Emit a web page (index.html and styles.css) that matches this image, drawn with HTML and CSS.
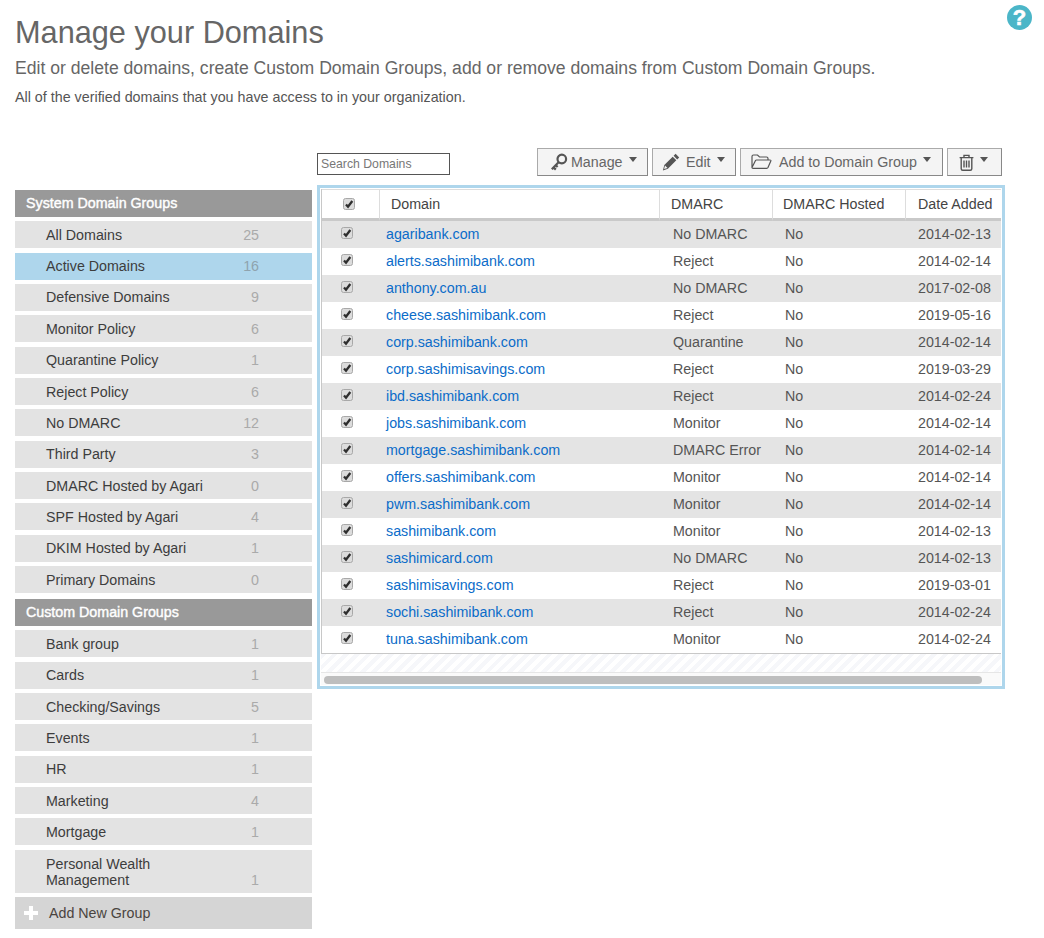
FILE: index.html
```html
<!DOCTYPE html>
<html lang="en">
<head>
    <meta charset="UTF-8">
    <meta name="viewport" content="width=device-width, initial-scale=1.0">
    <title>Manage your Domains</title>
    <link rel="stylesheet" href="styles.css">
</head>
<body>

<svg class="defs" width="0" height="0">
    <symbol id="tick" viewBox="0 0 12 12">
        <rect x="0.5" y="0.5" width="11" height="11" rx="2" fill="#dcdcdc" stroke="#a8a8a8"/>
        <path d="M3 6.600 L5 8.800 L9.300 3" fill="none" stroke="#2e2e2e" stroke-width="2.300"/>
    </symbol>
</svg>

<a class="help" href="#">?</a>

<header class="page-head">
    <h1>Manage your Domains</h1>
    <h2>Edit or delete domains, create Custom Domain Groups, add or remove domains from Custom Domain Groups.</h2>
    <p>All of the verified domains that you have access to in your organization.</p>
</header>

<div class="layout">
    <aside class="sidebar">
        <h3 class="group-title">System Domain Groups</h3>
        <ul class="group-list">
            <li><span>All Domains</span><b>25</b></li>
            <li class="active"><span>Active Domains</span><b>16</b></li>
            <li><span>Defensive Domains</span><b>9</b></li>
            <li><span>Monitor Policy</span><b>6</b></li>
            <li><span>Quarantine Policy</span><b>1</b></li>
            <li><span>Reject Policy</span><b>6</b></li>
            <li><span>No DMARC</span><b>12</b></li>
            <li><span>Third Party</span><b>3</b></li>
            <li><span>DMARC Hosted by Agari</span><b>0</b></li>
            <li><span>SPF Hosted by Agari</span><b>4</b></li>
            <li><span>DKIM Hosted by Agari</span><b>1</b></li>
            <li><span>Primary Domains</span><b>0</b></li>
        </ul>
        <h3 class="group-title">Custom Domain Groups</h3>
        <ul class="group-list">
            <li><span>Bank group</span><b>1</b></li>
            <li><span>Cards</span><b>1</b></li>
            <li><span>Checking/Savings</span><b>5</b></li>
            <li><span>Events</span><b>1</b></li>
            <li><span>HR</span><b>1</b></li>
            <li><span>Marketing</span><b>4</b></li>
            <li><span>Mortgage</span><b>1</b></li>
            <li class="tall"><span>Personal Wealth<br>Management</span><b>1</b></li>
        </ul>
        <div class="add-group">
            <svg class="plus" width="16" height="16" viewBox="0 0 16 16"><path d="M6 1h4v5h5v4h-5v5H6v-5H1V6h5z" fill="#fff"/></svg>
            Add New Group
        </div>
    </aside>

    <main class="content">
        <div class="toolbar">
            <input class="search" type="text" placeholder="Search Domains">
            <div class="buttons">
                <button class="btn btn-manage">
                    <svg width="18" height="18" viewBox="0 0 18 18"><circle cx="11.800" cy="6" r="4.300" fill="none" stroke="#555" stroke-width="2.200"/><path d="M8.800 9 L1.800 16.200 M3.600 14.400 L5.800 16.600 M5.800 12.200 L7.600 14" fill="none" stroke="#555" stroke-width="2.200"/></svg>
                    Manage<i class="caret"></i>
                </button>
                <button class="btn btn-edit">
                    <svg width="18" height="18" viewBox="0 0 18 18"><path d="M13.600.8l3.600 3.600-2 2-3.600-3.600zM10.700 3.700l3.600 3.600-8.400 8.400-5 1.700 1.400-5.300zM3 12.500l-.9 3.400 3.400-1z" fill="#555" fill-rule="evenodd"/></svg>
                    Edit<i class="caret"></i>
                </button>
                <button class="btn btn-group">
                    <svg width="21" height="16" viewBox="0 0 21 16"><path d="M1 13.500V2.500A1.500 1.500 0 0 1 2.500 1h4l2 2h7A1.500 1.500 0 0 1 17 4.500V6M1 13.500L4.500 6.500Q4.800 6 5.500 6H19q1.200 0 .8 1l-2.800 6.500q-.4.800-1.300.8H2q-1 0-1-.8z" fill="none" stroke="#555" stroke-width="1.200"/></svg>
                    Add to Domain Group<i class="caret"></i>
                </button>
                <button class="btn btn-trash">
                    <svg width="15" height="17" viewBox="0 0 15 17"><path d="M5 3.300V1.400h5v1.900M.6 3.600h13.800M2.200 3.600v11.200q0 1.500 1.500 1.500h7.600q1.500 0 1.500-1.500V3.600M5 6.500v7M7.500 6.500v7M10 6.500v7" fill="none" stroke="#555" stroke-width="1.400"/></svg>
                    <i class="caret"></i>
                </button>
            </div>
        </div>

        <div class="grid-frame">
            <table class="grid">
                <thead>
                    <tr>
                        <th class="col-check"><svg class="tick"><use href="#tick"/></svg></th>
                        <th class="col-domain">Domain</th>
                        <th class="col-dmarc">DMARC</th>
                        <th class="col-hosted">DMARC Hosted</th>
                        <th class="col-date">Date Added</th>
                    </tr>
                </thead>
                <tbody>
                    <tr><td class="col-check"><svg class="tick"><use href="#tick"/></svg></td><td class="col-domain"><a href="#">agaribank.com</a></td><td class="col-dmarc">No DMARC</td><td class="col-hosted">No</td><td class="col-date">2014-02-13</td></tr>
                    <tr><td class="col-check"><svg class="tick"><use href="#tick"/></svg></td><td class="col-domain"><a href="#">alerts.sashimibank.com</a></td><td class="col-dmarc">Reject</td><td class="col-hosted">No</td><td class="col-date">2014-02-14</td></tr>
                    <tr><td class="col-check"><svg class="tick"><use href="#tick"/></svg></td><td class="col-domain"><a href="#">anthony.com.au</a></td><td class="col-dmarc">No DMARC</td><td class="col-hosted">No</td><td class="col-date">2017-02-08</td></tr>
                    <tr><td class="col-check"><svg class="tick"><use href="#tick"/></svg></td><td class="col-domain"><a href="#">cheese.sashimibank.com</a></td><td class="col-dmarc">Reject</td><td class="col-hosted">No</td><td class="col-date">2019-05-16</td></tr>
                    <tr><td class="col-check"><svg class="tick"><use href="#tick"/></svg></td><td class="col-domain"><a href="#">corp.sashimibank.com</a></td><td class="col-dmarc">Quarantine</td><td class="col-hosted">No</td><td class="col-date">2014-02-14</td></tr>
                    <tr><td class="col-check"><svg class="tick"><use href="#tick"/></svg></td><td class="col-domain"><a href="#">corp.sashimisavings.com</a></td><td class="col-dmarc">Reject</td><td class="col-hosted">No</td><td class="col-date">2019-03-29</td></tr>
                    <tr><td class="col-check"><svg class="tick"><use href="#tick"/></svg></td><td class="col-domain"><a href="#">ibd.sashimibank.com</a></td><td class="col-dmarc">Reject</td><td class="col-hosted">No</td><td class="col-date">2014-02-24</td></tr>
                    <tr><td class="col-check"><svg class="tick"><use href="#tick"/></svg></td><td class="col-domain"><a href="#">jobs.sashimibank.com</a></td><td class="col-dmarc">Monitor</td><td class="col-hosted">No</td><td class="col-date">2014-02-14</td></tr>
                    <tr><td class="col-check"><svg class="tick"><use href="#tick"/></svg></td><td class="col-domain"><a href="#">mortgage.sashimibank.com</a></td><td class="col-dmarc">DMARC Error</td><td class="col-hosted">No</td><td class="col-date">2014-02-14</td></tr>
                    <tr><td class="col-check"><svg class="tick"><use href="#tick"/></svg></td><td class="col-domain"><a href="#">offers.sashimibank.com</a></td><td class="col-dmarc">Monitor</td><td class="col-hosted">No</td><td class="col-date">2014-02-14</td></tr>
                    <tr><td class="col-check"><svg class="tick"><use href="#tick"/></svg></td><td class="col-domain"><a href="#">pwm.sashimibank.com</a></td><td class="col-dmarc">Monitor</td><td class="col-hosted">No</td><td class="col-date">2014-02-14</td></tr>
                    <tr><td class="col-check"><svg class="tick"><use href="#tick"/></svg></td><td class="col-domain"><a href="#">sashimibank.com</a></td><td class="col-dmarc">Monitor</td><td class="col-hosted">No</td><td class="col-date">2014-02-13</td></tr>
                    <tr><td class="col-check"><svg class="tick"><use href="#tick"/></svg></td><td class="col-domain"><a href="#">sashimicard.com</a></td><td class="col-dmarc">No DMARC</td><td class="col-hosted">No</td><td class="col-date">2014-02-13</td></tr>
                    <tr><td class="col-check"><svg class="tick"><use href="#tick"/></svg></td><td class="col-domain"><a href="#">sashimisavings.com</a></td><td class="col-dmarc">Reject</td><td class="col-hosted">No</td><td class="col-date">2019-03-01</td></tr>
                    <tr><td class="col-check"><svg class="tick"><use href="#tick"/></svg></td><td class="col-domain"><a href="#">sochi.sashimibank.com</a></td><td class="col-dmarc">Reject</td><td class="col-hosted">No</td><td class="col-date">2014-02-24</td></tr>
                    <tr><td class="col-check"><svg class="tick"><use href="#tick"/></svg></td><td class="col-domain"><a href="#">tuna.sashimibank.com</a></td><td class="col-dmarc">Monitor</td><td class="col-hosted">No</td><td class="col-date">2014-02-24</td></tr>
                </tbody>
            </table>
            <div class="hatch"></div>
            <div class="scroll-track"><div class="scroll-thumb"></div></div>
        </div>
    </main>
</div>

</body>
</html>
```

FILE: styles.css
```css
* {
    box-sizing: border-box;
}
body {
    margin: 0;
    height: 938px;
    overflow: hidden;
    padding: 15px 0 0 15px;
    font-family: "Liberation Sans", Arial, sans-serif;
    font-size: 14.25px;
    color: #3d3d3d;
    background: #fff;
}
.defs {
    position: absolute;
}
.help {
    position: absolute;
    top: 5px;
    left: 1007px;
    width: 25px;
    height: 25px;
    border-radius: 50%;
    background: #4bb6c8;
    color: #fff;
    font-size: 22px;
    font-weight: bold;
    line-height: 25px;
    text-align: center;
    text-decoration: none;
    -webkit-text-stroke: 0.6px #fff;
}

.page-head h1 {
    margin: 0;
    font-size: 30.7px;
    line-height: 36px;
    font-weight: normal;
    color: #666;
}
.page-head h2 {
    margin: 6px 0 0;
    font-size: 17.6px;
    line-height: 22px;
    font-weight: normal;
    color: #666;
}
.page-head p {
    margin: 10px 0 0;
    font-size: 14.3px;
    line-height: 17px;
    color: #555;
}

.layout {
    display: flex;
    gap: 5px;
    margin-top: 42px;
}
.sidebar {
    width: 297px;
    padding-top: 42.25px;
}
.group-title {
    margin: 0 0 4px;
    height: 27px;
    padding-left: 11px;
    background: #999;
    color: #fff;
    font-size: 14.25px;
    line-height: 27px;
    font-weight: normal;
    -webkit-text-stroke: 0.4px #fff;
}
.group-list + .group-title {
    margin-top: 6.1px;
}
.group-list {
    list-style: none;
    margin: 0;
    padding: 0;
}
.group-list li {
    display: flex;
    align-items: center;
    justify-content: space-between;
    height: 27px;
    margin-bottom: 4.36px;
    padding: 0 53px 0 31px;
    background: #e3e3e3;
}
.group-list li b {
    font-weight: normal;
    color: #aaa;
}
.group-list li.active {
    background: #aed6ec;
}
.group-list li.active b {
    color: #8fa3ae;
}
.group-list li.tall {
    height: 43px;
    align-items: flex-end;
    line-height: 16px;
    padding-bottom: 5px;
}
.add-group {
    display: flex;
    align-items: center;
    gap: 10px;
    height: 32px;
    padding-left: 8px;
    background: #d5d5d5;
    color: #4a4440;
}

.content {
    width: 688px;
}
.toolbar {
    display: flex;
    justify-content: space-between;
    align-items: flex-end;
    height: 28px;
    padding-right: 3px;
}
.search {
    width: 133px;
    height: 22px;
    margin-bottom: 1px;
    padding: 0 3px;
    border: 1px solid #555;
    border-radius: 0;
    outline: none;
    font-family: inherit;
    font-size: 12.25px;
}
.search::placeholder {
    color: #777;
}
.buttons {
    display: flex;
    gap: 4px;
}
.btn {
    display: flex;
    align-items: center;
    height: 28px;
    padding: 0;
    border: 1px solid #aaa;
    border-right-color: #888;
    border-bottom-color: #888;
    background: #f4f4f4;
    color: #666;
    font-family: inherit;
    font-size: 14.25px;
}
.btn-manage {
    width: 111px;
    padding-left: 12px;
}
.btn-manage svg {
    margin-right: 3px;
}
.btn-edit {
    width: 84px;
    padding-left: 9px;
}
.btn-edit svg {
    margin-right: 6px;
}
.btn-group {
    width: 203px;
    padding-left: 10px;
}
.btn-group svg {
    margin-right: 7px;
}
.btn-trash {
    width: 55px;
    padding-left: 11px;
}
.caret {
    width: 0;
    height: 0;
    margin: -6px 0 0 6px;
    border-left: 4.5px solid transparent;
    border-right: 4.5px solid transparent;
    border-top: 5px solid #555;
}

.grid-frame {
    height: 504px;
    margin-top: 9px;
    padding: 1px;
    border: 3px solid #aed6ec;
}
.grid {
    width: 680px;
    border-collapse: separate;
    border-spacing: 0;
    table-layout: fixed;
    border-bottom: 1px solid #c8c8c8;
    border-left: 1px solid #c8c8c8;
}
.grid th {
    height: 32px;
    padding: 0;
    background: #fff;
    border-top: 1px solid #ddd;
    border-bottom: 3px solid #c9c9c9;
    border-left: 1px solid #ddd;
    font-size: 14.25px;
    font-weight: normal;
    text-align: left;
    color: #444;
}
.grid td {
    height: 27px;
    padding: 0 0 2px;
    color: #555;
}
.grid tbody tr:nth-child(odd) {
    background: #e4e4e4;
}
.grid a {
    color: #0b6cc9;
    text-decoration: none;
}
.col-check {
    width: 57px;
}
.col-domain {
    width: 280px;
}
.col-dmarc {
    width: 113px;
}
.col-hosted {
    width: 133px;
}
.col-date {
    width: 96px;
}
th.col-check {
    border-left: none;
}
th.col-domain,
th.col-dmarc {
    padding-left: 11px;
}
th.col-hosted {
    padding-left: 10px;
}
th.col-date {
    padding-left: 12px;
}
td.col-domain {
    padding-left: 7px;
}
td.col-dmarc {
    padding-left: 14px;
}
td.col-hosted {
    padding-left: 13px;
}
td.col-date {
    padding-left: 13px;
}
.tick {
    display: block;
    width: 12px;
    height: 12px;
    margin: -1px 0 0 19px;
}
th .tick {
    margin-left: 21px;
}
.hatch {
    height: 19px;
    background: repeating-linear-gradient(135deg, #f6f7fa 0 4px, #fff 4px 8px);
    border-bottom: 1px solid #e6e6e6;
}
.scroll-track {
    height: 12px;
    padding: 3px 19px 1px 3px;
    background: #fafafa;
}
.scroll-thumb {
    height: 8px;
    border-radius: 4px;
    background: #bebebe;
}
```
